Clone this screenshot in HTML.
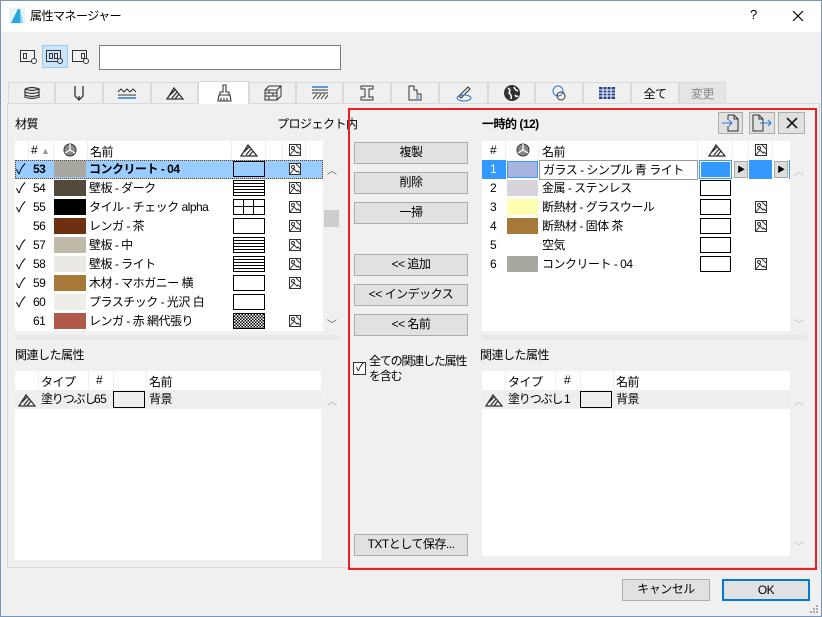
<!DOCTYPE html>
<html><head><meta charset="utf-8"><style>
*{box-sizing:border-box;margin:0;padding:0}
body{width:822px;height:617px;overflow:hidden;background:#f0f0f0;font-family:"Liberation Sans","Noto Sans CJK JP",sans-serif;font-size:12px;color:#000;position:relative;letter-spacing:-0.5px}
.a{position:absolute}
.win{left:0;top:0;width:822px;height:617px;border:1px solid #7a96b4}
.btn{position:absolute;background:#e1e1e1;border:1px solid #adadad;text-align:center;line-height:19px;font-size:12px}
.tab{position:absolute;top:82px;height:21px;border:1px solid #d9d9d9;border-bottom:none;background:#f0f0f0;display:flex;align-items:center;justify-content:center}
.wh{background:#fff}
.row{position:absolute;height:19px;line-height:19px}
.sw{position:absolute;width:32px;height:16px}
.fb{position:absolute;width:32px;height:16px;border:1px solid #000;background:#fff}
.ln{background:repeating-linear-gradient(#fff 0 2px,#000 2px 3px)}
.ic{position:absolute;width:14px;height:14px}
.sep{position:absolute;top:141px;width:1px;height:18px;background:#eee}
</style></head><body>
<svg width="0" height="0" style="position:absolute"><defs>
<symbol id="im" viewBox="0 0 14 14"><rect x="1.5" y="1.5" width="11" height="11" fill="#fff" stroke="#333"/><circle cx="5" cy="5" r="1.5" fill="none" stroke="#333"/><path d="M2 12 L6 7 L9 10 L10 9 L12 11" fill="none" stroke="#333"/><path d="M8 2 L12 6" stroke="#333"/></symbol>
<symbol id="fl" viewBox="0 0 18 14"><path d="M1 13 L8 2 L17 13 Z M4 9 L9 4 M6 12 L11 6 M9 13 L13 8 M2 13 L16 13" fill="none" stroke="#333" stroke-width="1.3"/></symbol>
<symbol id="pie" viewBox="0 0 14 14"><circle cx="7" cy="7" r="6" fill="#888" stroke="#333"/><path d="M7 7 L7 1 M7 7 L2 10 M7 7 L12 10" stroke="#fff" stroke-width="1.3"/></symbol>
</defs></svg>
<div class="a win"></div>
<div class="a" style="left:1px;top:1px;width:820px;height:31px;background:#fff"></div>
<svg class="a" style="left:9px;top:8px" width="16" height="16"><rect width="16" height="16" fill="#e8f4fb"/><path d="M2 15 L9 1 L11 1 L11 15 Z" fill="#29a8e0"/><path d="M11 1 L14 15 L11 15Z" fill="#7fd0f0"/></svg>
<div class="a" style="left:30px;top:7px;font-size:12px">属性マネージャー</div>
<div class="a" style="left:750px;top:7px;font-size:13px">?</div>
<svg class="a" style="left:792px;top:10px" width="12" height="12"><path d="M1 1L11 11M11 1L1 11" stroke="#000" stroke-width="1.2"/></svg>
<svg class="a" style="left:19px;top:46px" width="20" height="20"><rect x="1.5" y="4.5" width="14" height="11" fill="none" stroke="#333"/><rect x="4.5" y="7.5" width="3" height="5" fill="none" stroke="#333"/><circle cx="15" cy="15" r="2.5" fill="#fff" stroke="#333"/></svg>
<div class="a" style="left:42px;top:45px;width:26px;height:23px;background:#cce4f7;border:1px solid #99c9ef"></div>
<svg class="a" style="left:45px;top:46px" width="20" height="20"><rect x="1.5" y="4.5" width="14" height="11" fill="none" stroke="#333"/><rect x="4.5" y="7.5" width="3" height="5" fill="none" stroke="#333"/><rect x="9.5" y="7.5" width="3" height="5" fill="none" stroke="#333"/><circle cx="15" cy="15" r="2.5" fill="#cce4f7" stroke="#333"/></svg>
<svg class="a" style="left:71px;top:46px" width="20" height="20"><rect x="1.5" y="4.5" width="14" height="11" fill="none" stroke="#333"/><rect x="10.5" y="7.5" width="3" height="5" fill="none" stroke="#333"/><circle cx="15" cy="15" r="2.5" fill="#fff" stroke="#333"/></svg>
<div class="a" style="left:99px;top:45px;width:242px;height:25px;background:#fff;border:1px solid #7a7a7a"></div>
<div class="a" style="left:7px;top:103px;width:813px;height:465px;border:1px solid #d9d9d9;background:#f0f0f0"></div>
<div class="tab" style="left:8px;width:47px"><svg width="18" height="14"><path d="M2 3Q9 0 16 3Q9 6 2 3M2 6Q9 9 16 6M2 9Q9 12 16 9M2 3V11Q9 14 16 11V3" fill="none" stroke="#333" stroke-width="1.2"/></svg></div>
<div class="tab" style="left:55px;width:48px"><svg width="14" height="16"><path d="M3 1V11L7 15L11 11V1M7 11V15" fill="none" stroke="#333" stroke-width="1.3"/></svg></div>
<div class="tab" style="left:103px;width:48px"><svg width="20" height="12"><path d="M1 5L4 2L7 5L10 2L13 5L16 2L19 5M1 8H19" fill="none" stroke="#333"/><path d="M1 11H19" stroke="#2a7ad5" stroke-width="1.5"/></svg></div>
<div class="tab" style="left:151px;width:47px"><svg width="18" height="14"><use href="#fl"/></svg></div>
<div class="tab" style="left:198px;width:51px;top:81px;height:23px;background:#fff;border-color:#d9d9d9;z-index:2"><svg width="18" height="18"><path d="M8 1H11V8H14V11H5V8H8Z M4 11H15L16 17H3Z M6 14V17M9 14V17M12 14V17" fill="none" stroke="#333" stroke-width="1.1"/></svg></div>
<div class="tab" style="left:249px;width:47px"><svg width="18" height="16"><path d="M1 5H13V15H1Z M1 5L5 1H17L13 5 M17 1V11L13 15 M1 8H13M1 11H13M5 5V8M9 8V11M5 11V15" fill="none" stroke="#333"/></svg></div>
<div class="tab" style="left:296px;width:47px"><svg width="18" height="14"><path d="M1 1H17" stroke="#2a7ad5" stroke-width="1.5"/><path d="M1 4H17M1 7H17M2 13L6 8M6 13L10 8M10 13L14 8M14 13L17 9" stroke="#333"/></svg></div>
<div class="tab" style="left:343px;width:48px"><svg width="16" height="16"><path d="M2 1H14V4H10V12H14V15H2V12H6V4H2Z" fill="none" stroke="#333"/></svg></div>
<div class="tab" style="left:391px;width:48px"><svg width="16" height="16"><path d="M2 1H7V5H10V9H14V15H2Z" fill="none" stroke="#333"/><path d="M9 11H12M9 13H12" stroke="#2a7ad5"/></svg></div>
<div class="tab" style="left:439px;width:49px"><svg width="18" height="18"><path d="M4 12L13 3L15 5L6 14Z" fill="none" stroke="#333"/><ellipse cx="9" cy="14" rx="7" ry="3" fill="none" stroke="#2a7ad5"/></svg></div>
<div class="tab" style="left:488px;width:47px"><svg width="18" height="18"><circle cx="9" cy="9" r="8" fill="#333"/><path d="M5 4Q8 6 6 9Q9 11 8 15M11 3Q12 6 15 7M12 11Q13 13 15 12" stroke="#fff" stroke-width="1.5" fill="none"/></svg></div>
<div class="tab" style="left:535px;width:48px"><svg width="18" height="18"><circle cx="8" cy="7" r="5" fill="none" stroke="#2a7ad5"/><circle cx="11" cy="12" r="4" fill="none" stroke="#333"/></svg></div>
<div class="tab" style="left:583px;width:48px"><svg width="18" height="14"><rect x="1" y="1" width="16" height="12" fill="#1f3f8f"/><path d="M1 4H17M1 7H17M1 10H17M5 1V13M9 1V13M13 1V13" stroke="#fff"/></svg></div>
<div class="tab" style="left:631px;width:48px">全て</div>
<div class="tab" style="left:679px;width:47px;background:#e5e5e5;color:#888">変更</div>
<div class="a" style="left:15px;top:115px">材質</div>
<div class="a" style="left:277px;top:115px">プロジェクト内</div>
<div class="a wh" style="left:15px;top:141px;width:308px;height:190px"></div>
<div class="a" style="left:31px;top:143px">#</div><div class="a" style="left:41px;top:143px;color:#999;font-size:9px;line-height:16px">▲</div>
<svg class="a" style="left:63px;top:143px" width="14" height="14"><use href="#pie"/></svg>
<div class="a" style="left:90px;top:143px">名前</div>
<svg class="a" style="left:240px;top:143px" width="18" height="14"><use href="#fl"/></svg>
<svg class="a" style="left:288px;top:143px" width="14" height="14"><use href="#im"/></svg>
<div class="sep" style="left:28px"></div><div class="sep" style="left:53px"></div><div class="sep" style="left:87px"></div><div class="sep" style="left:231px"></div><div class="sep" style="left:265px"></div><div class="sep" style="left:282px"></div><div class="sep" style="left:305px"></div>
<div class="a" style="left:15px;top:160px;width:308px;height:19px;background:#99ccff;border:1px dotted #704010"></div>
<div class="row" style="left:16px;top:160px;font-size:14px">✓</div><div class="row" style="left:33px;top:160px;font-weight:bold">53</div><div class="sw" style="left:54px;top:161px;background:#a8a8a0"></div><div class="row" style="left:89px;top:160px;font-weight:bold">コンクリート - 04</div><div class="fb" style="left:233px;top:161px;background:#99ccff"></div><svg class="ic" style="left:288px;top:162px"><use href="#im"/></svg>
<div class="row" style="left:16px;top:179px;font-size:14px">✓</div><div class="row" style="left:33px;top:179px">54</div><div class="sw" style="left:54px;top:180px;background:#524a3a"></div><div class="row" style="left:89px;top:179px">壁板 - ダーク</div><div class="fb ln" style="left:233px;top:180px"></div><svg class="ic" style="left:288px;top:181px"><use href="#im"/></svg>
<div class="row" style="left:16px;top:198px;font-size:14px">✓</div><div class="row" style="left:33px;top:198px">55</div><div class="sw" style="left:54px;top:199px;background:#000"></div><div class="row" style="left:89px;top:198px">タイル - チェック alpha</div><div class="fb" style="left:233px;top:199px;background:linear-gradient(90deg,transparent 9px,#000 9px 10px,transparent 10px 19px,#000 19px 20px,transparent 20px),linear-gradient(transparent 6px,#000 6px 7px,transparent 7px),#fff"></div><svg class="ic" style="left:288px;top:200px"><use href="#im"/></svg>
<div class="row" style="left:33px;top:217px">56</div><div class="sw" style="left:54px;top:218px;background:#6e3010"></div><div class="row" style="left:89px;top:217px">レンガ - 茶</div><div class="fb" style="left:233px;top:218px"></div><svg class="ic" style="left:288px;top:219px"><use href="#im"/></svg>
<div class="row" style="left:16px;top:236px;font-size:14px">✓</div><div class="row" style="left:33px;top:236px">57</div><div class="sw" style="left:54px;top:237px;background:#c0baa8"></div><div class="row" style="left:89px;top:236px">壁板 - 中</div><div class="fb ln" style="left:233px;top:237px"></div><svg class="ic" style="left:288px;top:238px"><use href="#im"/></svg>
<div class="row" style="left:16px;top:255px;font-size:14px">✓</div><div class="row" style="left:33px;top:255px">58</div><div class="sw" style="left:54px;top:256px;background:#ebe9e4"></div><div class="row" style="left:89px;top:255px">壁板 - ライト</div><div class="fb ln" style="left:233px;top:256px"></div><svg class="ic" style="left:288px;top:257px"><use href="#im"/></svg>
<div class="row" style="left:16px;top:274px;font-size:14px">✓</div><div class="row" style="left:33px;top:274px">59</div><div class="sw" style="left:54px;top:275px;background:#a87838"></div><div class="row" style="left:89px;top:274px">木材 - マホガニー 横</div><div class="fb" style="left:233px;top:275px"></div><svg class="ic" style="left:288px;top:276px"><use href="#im"/></svg>
<div class="row" style="left:16px;top:293px;font-size:14px">✓</div><div class="row" style="left:33px;top:293px">60</div><div class="sw" style="left:54px;top:294px;background:#efede8"></div><div class="row" style="left:89px;top:293px">プラスチック - 光沢 白</div><div class="fb" style="left:233px;top:294px"></div>
<div class="row" style="left:33px;top:312px">61</div><div class="sw" style="left:54px;top:313px;background:#b05a4a"></div><div class="row" style="left:89px;top:312px">レンガ - 赤 網代張り</div><div class="fb" style="left:233px;top:313px;background:repeating-conic-gradient(#000 0 25%,#fff 0 50%) 0 0/3px 3px"></div><svg class="ic" style="left:288px;top:314px"><use href="#im"/></svg>
<div class="a" style="left:327px;top:162px;color:#555;font-size:10px">︿</div>
<div class="a" style="left:324px;top:210px;width:15px;height:17px;background:#cdcdcd"></div>
<div class="a" style="left:327px;top:316px;color:#555;font-size:10px">﹀</div>
<div class="a" style="left:15px;top:335px;width:325px;height:5px;background:#e8e8e8"></div>
<div class="a" style="left:15px;top:346px">関連した属性</div>
<div class="a wh" style="left:15px;top:371px;width:306px;height:189px"></div>
<div class="a" style="left:15px;top:390px;width:306px;height:19px;background:#eeeeee"></div>
<div class="a" style="left:41px;top:373px">タイプ</div><div class="a" style="left:96px;top:373px">#</div><div class="a" style="left:149px;top:373px">名前</div>
<div class="sep" style="left:38px;top:371px"></div><div class="sep" style="left:88px;top:371px"></div><div class="sep" style="left:113px;top:371px"></div><div class="sep" style="left:146px;top:371px"></div>
<svg class="a" style="left:18px;top:393px" width="18" height="14"><use href="#fl"/></svg>
<div class="row" style="left:41px;top:390px;letter-spacing:-1.2px">塗りつぶし</div><div class="row" style="left:94px;top:390px">65</div><div class="a" style="left:113px;top:391px;width:32px;height:17px;border:1px solid #000;background:#eee"></div><div class="row" style="left:149px;top:390px">背景</div>
<div class="a" style="left:327px;top:393px;color:#aaa;font-size:10px">︿</div>
<div class="a" style="left:348px;top:108px;width:469px;height:462px;border:2px solid #e82020"></div>
<div class="btn" style="left:354px;top:142px;width:114px;height:22px">複製</div>
<div class="btn" style="left:354px;top:172px;width:114px;height:22px">削除</div>
<div class="btn" style="left:354px;top:202px;width:114px;height:22px">一掃</div>
<div class="btn" style="left:354px;top:254px;width:114px;height:22px">&lt;&lt; 追加</div>
<div class="btn" style="left:354px;top:284px;width:114px;height:22px">&lt;&lt; インデックス</div>
<div class="btn" style="left:354px;top:314px;width:114px;height:22px">&lt;&lt; 名前</div>
<div class="a" style="left:353px;top:362px;width:13px;height:13px;border:1px solid #333;background:#fff;font-size:11px;line-height:11px;text-align:center">✓</div>
<div class="a" style="left:369px;top:354px;line-height:15px;letter-spacing:-1.2px">全ての関連した属性<br>を含む</div>
<div class="btn" style="left:354px;top:534px;width:114px;height:22px">TXTとして保存...</div>
<div class="a" style="left:482px;top:115px;font-weight:bold">一時的 (12)</div>
<div class="btn" style="left:718px;top:112px;width:25px;height:22px"><svg width="20" height="18" style="margin-top:1px"><path d="M7 1H13L17 5V17H7V12M7 6V1" fill="none" stroke="#333"/><path d="M13 1V5H17" fill="none" stroke="#333"/><path d="M1 9H11M8 6L11 9L8 12" fill="none" stroke="#2a7ad5"/></svg></div>
<div class="btn" style="left:749px;top:112px;width:26px;height:22px"><svg width="22" height="18" style="margin-top:1px"><path d="M2 1H8L12 5V17H2Z M8 1V5H12" fill="none" stroke="#333"/><path d="M9 9H20M17 6L20 9L17 12" fill="none" stroke="#2a7ad5"/></svg></div>
<div class="btn" style="left:778px;top:112px;width:27px;height:22px"><svg width="14" height="14" style="margin-top:3px"><path d="M2 2L12 12M12 2L2 12" stroke="#222" stroke-width="1.8"/></svg></div>
<div class="a wh" style="left:482px;top:141px;width:308px;height:190px"></div>
<div class="a" style="left:490px;top:143px">#</div>
<svg class="a" style="left:516px;top:143px" width="14" height="14"><use href="#pie"/></svg>
<div class="a" style="left:542px;top:143px">名前</div>
<svg class="a" style="left:708px;top:143px" width="18" height="14"><use href="#fl"/></svg>
<svg class="a" style="left:754px;top:143px" width="14" height="14"><use href="#im"/></svg>
<div class="sep" style="left:505px"></div><div class="sep" style="left:538px"></div><div class="sep" style="left:697px"></div><div class="sep" style="left:732px"></div><div class="sep" style="left:748px"></div><div class="sep" style="left:772px"></div>
<div class="a" style="left:482px;top:160px;width:308px;height:19px;background:#fff"></div>
<div class="a" style="left:482px;top:160px;width:24px;height:19px;background:#3399ff"></div>
<div class="row" style="left:490px;top:160px;color:#fff">1</div>
<div class="sw" style="left:507px;top:161px;width:31px;height:17px;background:#aab4e0;border:1px solid #3399ff"></div>
<div class="a" style="left:539px;top:160px;width:159px;height:20px;border:1px solid #999;background:#fff;padding-left:3px;line-height:18px">ガラス - シンプル 青 ライト</div>
<div class="a" style="left:700px;top:161px;width:31px;height:17px;background:#3399ff;border:1px solid #fff;outline:1px solid #3399ff"></div>
<div class="a" style="left:734px;top:161px;width:14px;height:17px;background:#ddd;border:1px solid #aaa;font-size:8px;line-height:15px;text-align:center">▶</div>
<div class="a" style="left:749px;top:160px;width:23px;height:19px;background:#3399ff"></div>
<div class="a" style="left:774px;top:161px;width:14px;height:17px;background:#ddd;border:1px solid #aaa;font-size:8px;line-height:15px;text-align:center">▶</div>
<div class="a" style="left:789px;top:160px;width:1px;height:19px;background:#3399ff"></div>
<div class="row" style="left:490px;top:179px">2</div><div class="sw" style="left:507px;top:180px;background:#d8d4dc;width:31px"></div><div class="row" style="left:542px;top:179px">金属 - ステンレス</div><div class="fb" style="left:700px;top:180px;width:31px"></div>
<div class="row" style="left:490px;top:198px">3</div><div class="sw" style="left:507px;top:199px;background:#ffffb0;width:31px"></div><div class="row" style="left:542px;top:198px">断熱材 - グラスウール</div><div class="fb" style="left:700px;top:199px;width:31px"></div><svg class="ic" style="left:754px;top:200px"><use href="#im"/></svg>
<div class="row" style="left:490px;top:217px">4</div><div class="sw" style="left:507px;top:218px;background:#a87838;width:31px"></div><div class="row" style="left:542px;top:217px">断熱材 - 固体 茶</div><div class="fb" style="left:700px;top:218px;width:31px"></div><svg class="ic" style="left:754px;top:219px"><use href="#im"/></svg>
<div class="row" style="left:490px;top:236px">5</div><div class="row" style="left:542px;top:236px">空気</div><div class="fb" style="left:700px;top:237px;width:31px"></div>
<div class="row" style="left:490px;top:255px">6</div><div class="sw" style="left:507px;top:256px;background:#a8a8a0;width:31px"></div><div class="row" style="left:542px;top:255px">コンクリート - 04</div><div class="fb" style="left:700px;top:256px;width:31px"></div><svg class="ic" style="left:754px;top:257px"><use href="#im"/></svg>
<div class="a" style="left:794px;top:163px;color:#bbb;font-size:10px">︿</div>
<div class="a" style="left:794px;top:316px;color:#bbb;font-size:10px">﹀</div>
<div class="a" style="left:482px;top:335px;width:325px;height:5px;background:#e8e8e8"></div>
<div class="a" style="left:480px;top:346px">関連した属性</div>
<div class="a wh" style="left:482px;top:371px;width:308px;height:185px"></div>
<div class="a" style="left:482px;top:390px;width:308px;height:19px;background:#eeeeee"></div>
<div class="a" style="left:508px;top:373px">タイプ</div><div class="a" style="left:564px;top:373px">#</div><div class="a" style="left:616px;top:373px">名前</div>
<div class="sep" style="left:505px;top:371px"></div><div class="sep" style="left:555px;top:371px"></div><div class="sep" style="left:580px;top:371px"></div><div class="sep" style="left:613px;top:371px"></div>
<svg class="a" style="left:485px;top:393px" width="18" height="14"><use href="#fl"/></svg>
<div class="row" style="left:508px;top:390px;letter-spacing:-1.2px">塗りつぶし</div><div class="row" style="left:564px;top:390px">1</div><div class="a" style="left:580px;top:391px;width:32px;height:17px;border:1px solid #000;background:#eee"></div><div class="row" style="left:616px;top:390px">背景</div>
<div class="a" style="left:794px;top:393px;color:#bbb;font-size:10px">︿</div>
<div class="a" style="left:794px;top:538px;color:#bbb;font-size:10px">﹀</div>
<div class="btn" style="left:622px;top:579px;width:88px;height:22px">キャンセル</div>
<div class="btn" style="left:722px;top:579px;width:88px;height:22px;border:2px solid #0078d7;line-height:18px">OK</div>
<svg class="a" style="left:809px;top:604px" width="10" height="10"><g fill="#aaa"><rect x="7" y="1" width="2" height="2"/><rect x="4" y="4" width="2" height="2"/><rect x="7" y="4" width="2" height="2"/><rect x="1" y="7" width="2" height="2"/><rect x="4" y="7" width="2" height="2"/><rect x="7" y="7" width="2" height="2"/></g></svg>
</body></html>
